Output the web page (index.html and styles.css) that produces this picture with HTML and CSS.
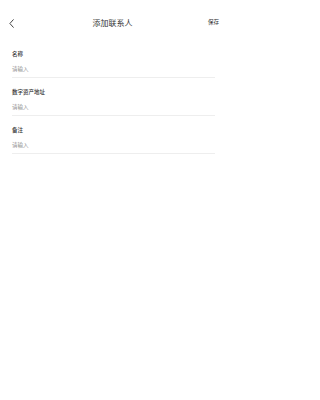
FILE: index.html
```html
<!DOCTYPE html>
<html lang="zh-CN">
<head>
<meta charset="utf-8">
<link rel="stylesheet" href="styles.css">
</head>
<body>
<div class="page">
  <header class="nav">
    <div class="back">
      <svg width="5" height="9" viewBox="0 0 5 9"><path d="M4.3 0.7 L0.9 4.5 L4.3 8.3" fill="none" stroke="#444" stroke-width="1" stroke-linecap="round" stroke-linejoin="round"/></svg>
    </div>
    <div class="title">添加联系人</div>
    <div class="save">保存</div>
  </header>
  <main class="form">
    <div class="field">
      <div class="label">名称</div>
      <div class="placeholder">请输入</div>
    </div>
    <div class="field">
      <div class="label">数字资产地址</div>
      <div class="placeholder">请输入</div>
    </div>
    <div class="field">
      <div class="label">备注</div>
      <div class="placeholder">请输入</div>
    </div>
  </main>
</div>
</body>
</html>
```
FILE: styles.css
```css
html, body {
  margin: 0;
  padding: 0;
  background: #ffffff;
}
body {
  font-family: "Noto Sans CJK SC", "Noto Sans", sans-serif;
  color: #333333;
}
.page {
  width: 225px;
  min-height: 400px;
}
.nav {
  box-sizing: border-box;
  height: 40px;
  padding: 6px 6px 0 9px;
  display: flex;
  align-items: center;
}
.back {
  width: 12px;
  height: 10px;
  display: flex;
  align-items: center;
}
.title {
  flex: 1;
  text-align: center;
  font-size: 8px;
  line-height: 10px;
  color: #333333;
  margin-right: 4px;
}
.save {
  font-size: 5.5px;
  line-height: 8px;
  color: #333333;
  margin-bottom: 3px;
}
.form {
  padding: 0 10px 0 12px;
}
.field {
  padding: 10px 0 4px;
  border-bottom: 1px solid #eeeeee;
}
.label {
  font-size: 5.5px;
  line-height: 8px;
  font-weight: 500;
  color: #333333;
}
.placeholder {
  margin-top: 7px;
  font-size: 5.5px;
  line-height: 8px;
  color: #8f8f8f;
}
```
